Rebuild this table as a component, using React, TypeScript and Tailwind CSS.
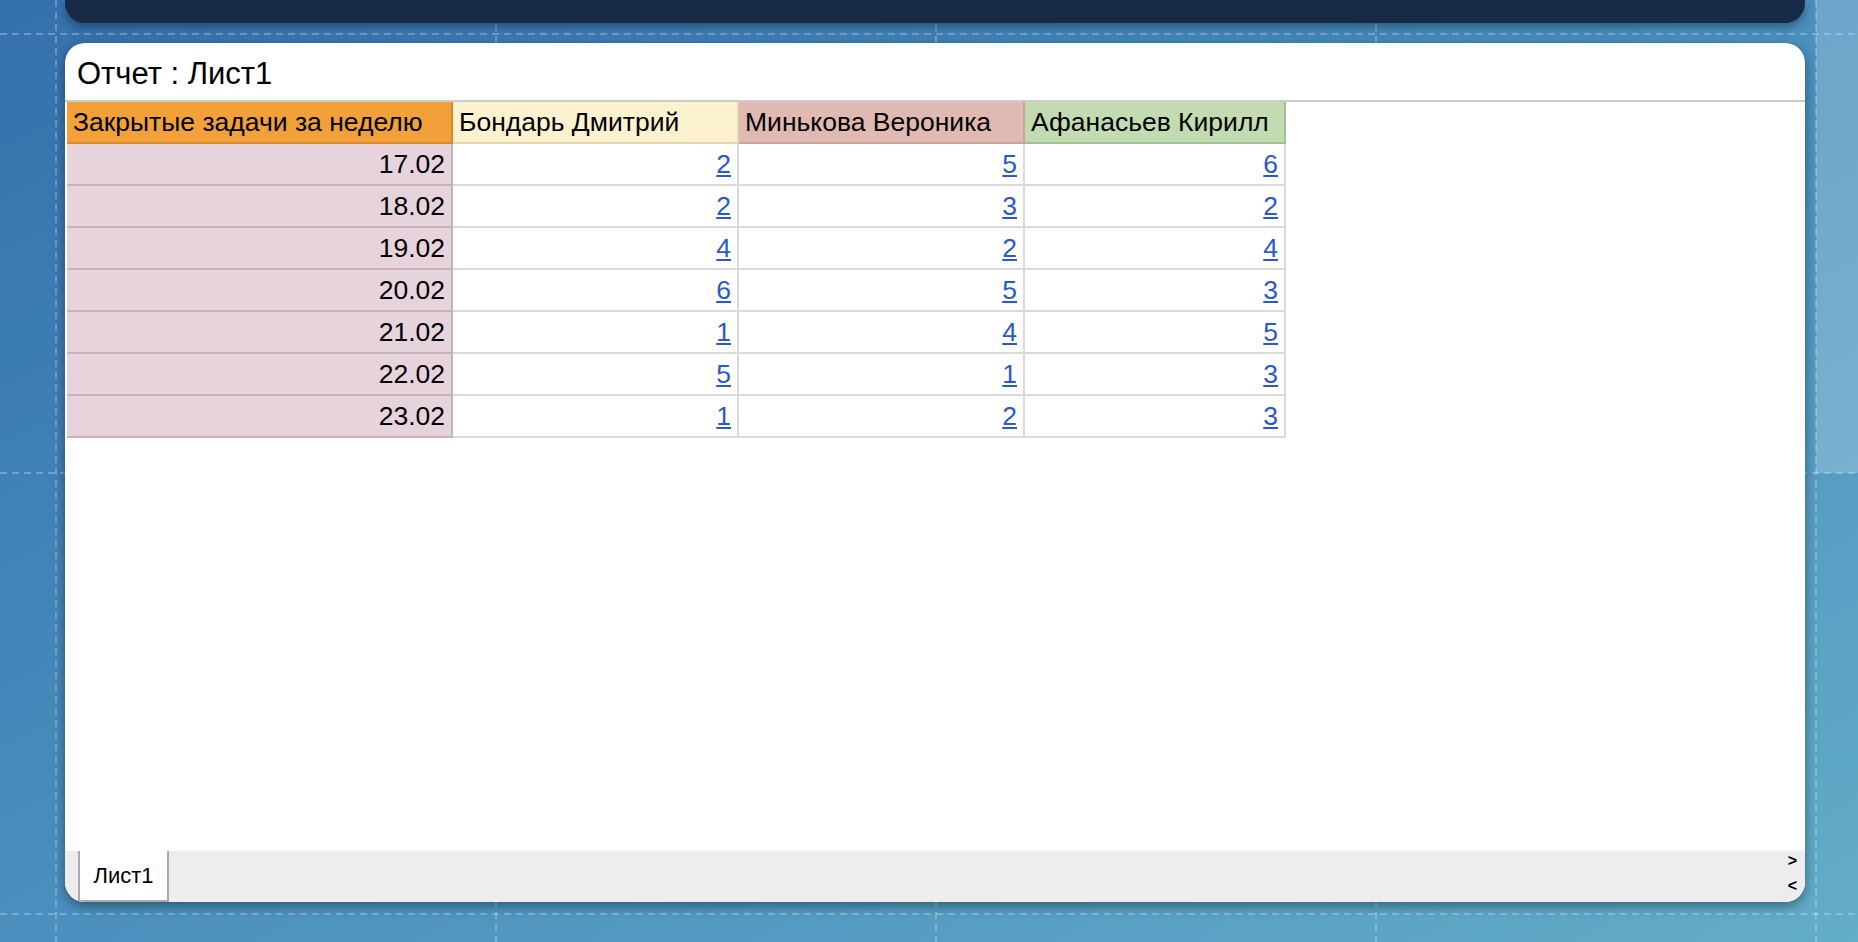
import React from 'react'

/** Строки отчета: дата и число закрытых задач по каждому сотруднику */
const people = [
  { name: 'Бондарь Дмитрий', bg: 'bg-[#fdf2d0]', border: 'border-[#e5d6aa]' },
  { name: 'Минькова Вероника', bg: 'bg-[#e0bab2]', border: 'border-[#c9a39a]' },
  { name: 'Афанасьев Кирилл', bg: 'bg-[#c2dbb0]', border: 'border-[#a4c093]' },
]

const rows: { date: string; values: number[] }[] = [
  { date: '17.02', values: [2, 5, 6] },
  { date: '18.02', values: [2, 3, 2] },
  { date: '19.02', values: [4, 2, 4] },
  { date: '20.02', values: [6, 5, 3] },
  { date: '21.02', values: [1, 4, 5] },
  { date: '22.02', values: [5, 1, 3] },
  { date: '23.02', values: [1, 2, 3] },
]

const colWidths = ['w-[286px]', 'w-[286px]', 'w-[261px]']

/** Декоративная сетка дашборда на фоне */
function GridLines() {
  const dash = { stroke: 'rgba(255,255,255,0.35)', strokeWidth: 1.5, strokeDasharray: '7 5' }
  return (
    <svg className="absolute inset-0 pointer-events-none" width="1858" height="942">
      {[56, 496, 936, 1376, 1816].map((x) => (
        <line key={x} x1={x} y1={0} x2={x} y2={942} {...dash} />
      ))}
      {[34, 473, 914].map((y) => (
        <line key={y} x1={0} y1={y} x2={1858} y2={y} {...dash} />
      ))}
    </svg>
  )
}

export default function App(): JSX.Element {
  return (
    <div
      className="relative h-[942px] w-full overflow-hidden bg-gradient-to-br from-[#3470ad] via-[#4a8fbe] to-[#62adc8]"
      style={{ fontFamily: '"Liberation Sans", Arial, sans-serif' }}
    >
      {/* светлая ячейка справа сверху */}
      <div className="absolute right-0 top-0 h-[473px] w-[42px] bg-white/20" />
      <GridLines />

      <div className="relative flex h-full flex-col pl-[65px] pr-[53px]">
        {/* верхняя панель */}
        <div className="h-[23px] rounded-b-[20px] bg-[#172a46] shadow-[0_4px_10px_rgba(0,0,0,0.35)]" />

        {/* окно отчета */}
        <div className="mt-[20px] flex h-[859px] flex-col overflow-hidden rounded-[20px] bg-white shadow-[0_4px_12px_rgba(0,0,0,0.4)]">
          <div className="flex h-[59px] items-center border-b-2 border-[#cccccc] pl-3 pt-[5px] text-[31px] text-black">
            Отчет : Лист1
          </div>

          <div className="flex-1 pl-[2px]">
            <table className="border-collapse text-[26.5px] leading-none text-black">
              <thead>
                <tr className="h-[41px]">
                  <th className="w-[385px] border-2 border-t-0 border-l-0 border-[#d88a2e] bg-[#f1a03a] px-[6px] text-left font-normal">
                    Закрытые задачи за неделю
                  </th>
                  {people.map((p, i) => (
                    <th
                      key={p.name}
                      className={`${colWidths[i]} border-2 border-t-0 ${p.border} ${p.bg} px-[6px] text-left font-normal`}
                    >
                      {p.name}
                    </th>
                  ))}
                </tr>
              </thead>
              <tbody>
                {rows.map((r) => (
                  <tr key={r.date} className="h-[42px]">
                    <td className="border-2 border-l-0 border-[#c7b3be] bg-[#e6d3dc] px-[6px] text-right">
                      {r.date}
                    </td>
                    {r.values.map((v, i) => (
                      <td key={i} className="border-2 border-[#dadada] px-[6px] text-right">
                        <a href="#" className="text-[#2a58cf] underline underline-offset-2">
                          {v}
                        </a>
                      </td>
                    ))}
                  </tr>
                ))}
              </tbody>
            </table>
          </div>

          {/* вкладки листов */}
          <div className="flex h-[51px] items-stretch bg-[#ededed]">
            <div className="ml-[13px] flex w-[91px] items-center justify-center border-x-2 border-b-2 border-[#aaaaaa] bg-white text-[22px] text-black">
              Лист1
            </div>
            <div className="flex-1" />
            <div className="flex flex-col items-center justify-between pr-[8px] pt-[2px] pb-[8px] text-[16px] font-bold leading-none text-black">
              <span>&gt;</span>
              <span>&lt;</span>
            </div>
          </div>
        </div>
      </div>
    </div>
  )
}
